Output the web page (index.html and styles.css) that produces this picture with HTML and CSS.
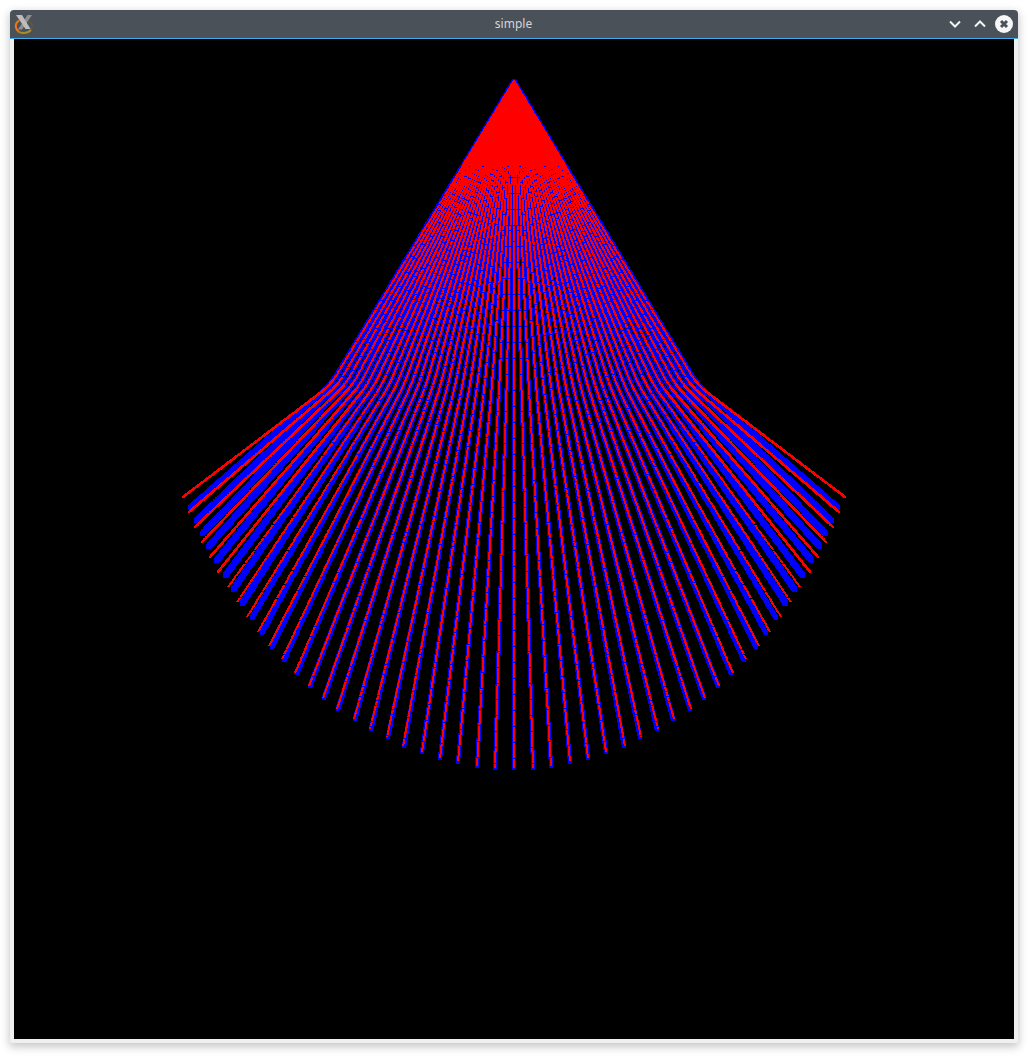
FILE: index.html
```html
<!DOCTYPE html>
<html lang="en">
<head>
<meta charset="utf-8">
<title>simple</title>
<link rel="stylesheet" href="styles.css">
</head>
<body>
<div class="window">
  <header class="titlebar">
    <svg class="app-icon" viewBox="0 0 20 20" width="20" height="20" aria-hidden="true">
      <ellipse class="ring-dark" cx="10" cy="12.5" rx="8.2" ry="6.4"/>
      <path class="ring-fire" d="M4.5 17.5 C0.5 14 1 9 5 6.5"/>
      <path class="ring-gold" d="M4 17.5 C8 20 14 19.5 17 16"/>
      <path class="x-b" d="M18 1 H13.5 L4 15.5 H8 Z"/>
      <path class="x-a" d="M2 1 H8 L16.5 15 H11.5 Z"/>
    </svg>
    <span class="title">simple</span>
    <div class="buttons">
      <svg class="btn btn-down" viewBox="0 0 14 14" width="14" height="14" aria-hidden="true"><path d="M2 4.5 L7 9.5 L12 4.5"/></svg>
      <svg class="btn" viewBox="0 0 14 14" width="14" height="14" aria-hidden="true"><path d="M2 9.5 L7 4.5 L12 9.5"/></svg>
      <svg class="close" viewBox="0 0 18 18" width="18" height="18" aria-hidden="true"><circle cx="9" cy="9" r="9"/><path d="M6 6 L12 12 M12 6 L6 12"/></svg>
    </div>
  </header>
  <div class="client">
    <canvas id="gl" class="gl" width="1000" height="1000"></canvas>
  </div>
</div>
<script src="script.js"></script>
</body>
</html>
```
FILE: styles.css
```css
* { box-sizing: border-box; }
html, body { margin: 0; height: 100%; background: #ffffff; overflow: hidden; }
body { padding: 10px 16px 16px 10px; }
.window {
  width: 1008px;
  height: 1033px;
  display: flex;
  flex-direction: column;
  border-radius: 4px 4px 2px 2px;
  background: #eff0f1;
  box-shadow: 0 3px 9px 1px rgba(0, 0, 0, 0.22);
}
.titlebar {
  height: 29px;
  flex: none;
  display: grid;
  grid-template-columns: 1fr auto 1fr;
  align-items: center;
  padding: 0 5px 0 4px;
  background: #4a5158;
  border-bottom: 1px solid #3daee9;
  border-radius: 4px 4px 0 0;
}
.app-icon { justify-self: start; }
.ring-dark { fill: none; stroke: #6b5a2c; stroke-width: 1.2; }
.ring-fire { fill: none; stroke: #e8761c; stroke-width: 2; }
.ring-gold { fill: none; stroke: #a98a2a; stroke-width: 2; }
.x-a { fill: #bdbdbd; }
.x-b { fill: #8f8f8f; }
.title {
  font-family: "Noto Sans", "Open Sans", sans-serif;
  font-size: 12px;
  line-height: 16px;
  color: #d3d6d8;
}
.buttons {
  justify-self: end;
  display: flex;
  align-items: center;
  gap: 8px;
}
.btn { fill: none; stroke: #f2f3f4; stroke-width: 2; }
.btn-down { margin-right: 3px; }
.close circle { fill: #f5f6f6; }
.close path { fill: none; stroke: #4a5158; stroke-width: 3; }
.client { flex: 1; padding: 0 4px 4px; }
.gl { display: block; width: 1000px; height: 1000px; background: #000000; }
```
FILE: script.js
```js
(function () {
  var canvas = document.getElementById('gl');
  var ctx = canvas.getContext('2d');
  var OX = 14, OY = 39, CX = 514;
  var APEX = [514, 81], BEND_Y = 385, BEND_STEP = 7.34;

  // Left-hand line ends in page pixels, index = distance from the centre line.
  var ENDS = [[514,768],[495,768],[477,766],[458,762],[440,758],[422,752],[403,746],
    [387,737],[370,729],[354,719],[337,709],[323,698],[309,686],[295,673],[282,659],
    [269,646],[258,632],[247,617],[237,602],[228,587],[218,572],[210,557],[202,542],
    [195,527],[189,512],[183,497]];
  // How far the blue stroke's end sits from the red stroke's end.
  var SHIFT = [[0,0],[0,0],[0,0],[0,0],[0,0],[0,0],[1,0],[1,0],[1,0],[1,0],[1,0],[1,0],[1,0],
    [2,0],[2,1],[3,1],[4,1],[5,1],[5,2],[5,3],[7,4],[6,4],[6,5],[7,7],[7,9],[7,11]];

  function path(k, end) {
    var bx = CX - BEND_STEP * k, by = BEND_Y, pts = [APEX];
    var d = 12;
    var ax = APEX[0] - bx, ay = APEX[1] - by, al = Math.hypot(ax, ay);
    var ex = end[0] - bx, ey = end[1] - by, el = Math.hypot(ex, ey);
    var p0 = [bx + ax / al * d, by + ay / al * d];
    var p2 = [bx + ex / el * d, by + ey / el * d];
    for (var i = 0; i <= 8; i++) {
      var t = i / 8, u = 1 - t;
      pts.push([u * u * p0[0] + 2 * u * t * bx + t * t * p2[0],
                u * u * p0[1] + 2 * u * t * by + t * t * p2[1]]);
    }
    pts.push(end);
    return pts;
  }

  function walk(pts, cb) {
    var s = 0;
    for (var i = 0; i + 1 < pts.length; i++) {
      var a = pts[i], b = pts[i + 1];
      var l = Math.hypot(b[0] - a[0], b[1] - a[1]);
      var n = Math.ceil(l / 0.4);
      var slope = Math.abs(b[0] - a[0]) / Math.max(Math.abs(b[1] - a[1]), 0.001);
      for (var j = 0; j < n; j++) {
        var t = j / n;
        cb(a[0] + (b[0] - a[0]) * t, a[1] + (b[1] - a[1]) * t, s + l * t, slope);
      }
      s += l;
    }
  }

  function both(fn) {
    for (var k = 0; k < ENDS.length; k++) {
      fn(k, 1);
      if (k > 0) fn(k, -1);
    }
  }

  function mirror(x, w, side) {
    return side === 1 ? Math.round(x - w / 2) : Math.round(2 * CX - x - w / 2);
  }

  ctx.fillStyle = '#000000';
  ctx.fillRect(0, 0, 1000, 1000);

  ctx.fillStyle = '#0000ff';
  both(function (k, side) {
    var end = [ENDS[k][0] + SHIFT[k][0], ENDS[k][1] + SHIFT[k][1]];
    var lower = k >= 18 ? 5 : 4;
    walk(path(k, end), function (x, y) {
      var w = y > BEND_Y + 40 ? lower : 4;
      ctx.fillRect(mirror(x, w, side) - OX, Math.round(y - w / 2) - OY, w, w);
    });
  });

  ctx.fillStyle = '#ff0000';
  both(function (k, side) {
    walk(path(k, ENDS[k]), function (x, y, s, slope) {
      if (y < 165 || slope > 0.75) {
        ctx.fillRect(mirror(x, 2, side) - OX, Math.round(y - 1) - OY, 2, 2);
        return;
      }
      if (s % 5.33 < 0.9) return;
      ctx.fillRect(mirror(x, 2, side) - OX, Math.round(y - 0.5) - OY, 2, 1);
    });
  });
})();
```
